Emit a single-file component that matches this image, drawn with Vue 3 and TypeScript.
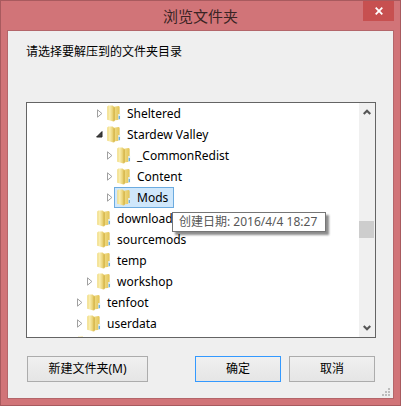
<script setup lang="ts">
import { ref } from 'vue'

interface FolderRow {
  name: string
  depth: number
  state: 'closed' | 'open' | 'leaf'
  tip?: string
}

const rows: FolderRow[] = [
  { name: 'Sheltered', depth: 3, state: 'closed' },
  { name: 'Stardew Valley', depth: 3, state: 'open' },
  { name: '_CommonRedist', depth: 4, state: 'closed' },
  { name: 'Content', depth: 4, state: 'closed' },
  { name: 'Mods', depth: 4, state: 'closed', tip: '创建日期: 2016/4/4 18:27' },
  { name: 'downloading', depth: 2, state: 'leaf' },
  { name: 'sourcemods', depth: 2, state: 'leaf' },
  { name: 'temp', depth: 2, state: 'leaf' },
  { name: 'workshop', depth: 2, state: 'closed' },
  { name: 'tenfoot', depth: 1, state: 'closed' },
  { name: 'userdata', depth: 1, state: 'closed' },
  { name: '', depth: 0, state: 'leaf' },
]

const selected = ref('Mods')
</script>

<template>
  <main class="window">
    <svg width="0" height="0" class="defs" aria-hidden="true">
      <defs>
        <linearGradient id="folder-front" x1="0" x2="1" y1="0" y2="0">
          <stop offset="0" stop-color="#f0da80" />
          <stop offset="0.35" stop-color="#faeeb0" />
          <stop offset="1" stop-color="#dfc052" />
        </linearGradient>
        <linearGradient id="folder-back" x1="0" x2="1" y1="0" y2="0">
          <stop offset="0" stop-color="#f6e596" />
          <stop offset="1" stop-color="#e2c458" />
        </linearGradient>
      </defs>
    </svg>

    <header class="titlebar">
      <h1 class="title">浏览文件夹</h1>
      <button class="close" type="button" aria-label="关闭">
        <svg width="8" height="8" viewBox="0 0 8 8" aria-hidden="true">
          <path d="M0.7 0.7L7.3 7.3M7.3 0.7L0.7 7.3" stroke="#fff" stroke-width="1.8" />
        </svg>
      </button>
    </header>

    <section class="client">
      <p class="prompt">请选择要解压到的文件夹目录</p>

      <div class="tree-box">
        <ul class="tree" role="tree" aria-label="文件夹">
          <li
            v-for="(row, i) in rows"
            :key="i"
            class="row"
            :class="'depth-' + row.depth"
            role="treeitem"
            :aria-selected="row.name === selected"
          >
            <span class="twisty">
              <svg v-if="row.state === 'closed'" width="6" height="9" viewBox="0 0 6 9" aria-hidden="true">
                <path d="M0.5 0.8V8.2L4.9 4.5Z" fill="#fff" stroke="#a0a0a0" />
              </svg>
              <svg v-else-if="row.state === 'open'" width="7" height="7" viewBox="0 0 7 7" aria-hidden="true">
                <path d="M6 0.6V6H0.6Z" fill="#404040" stroke="#262626" />
              </svg>
            </span>
            <button
              class="node"
              :class="{ selected: row.name && row.name === selected }"
              type="button"
              @click="selected = row.name"
            >
              <svg class="folder" width="14" height="17" viewBox="0 0 14 17" aria-hidden="true">
                <path d="M5 2L11.6 1L12.6 1.8V14.8L6 15.6Z" fill="url(#folder-back)" />
                <path d="M0.2 1.6L1.4 0.6H5.6L7.4 2.2V16.2L6.4 16.4L0.2 14.8Z" fill="url(#folder-front)" />
                <path d="M7.2 2.4V15.8" stroke="#cdaa3e" stroke-width="0.8" />
                <path d="M11.2 9H13.2V14.6L11.2 15Z" fill="#e2eef5" />
                <path d="M11.7 11H12.9V14H11.7Z" fill="#5ea9de" />
              </svg>
              <span class="label">{{ row.name }}</span>
            </button>
            <span v-if="row.tip" class="tip" role="tooltip">{{ row.tip }}</span>
          </li>
        </ul>
        <div class="scrollbar" aria-hidden="true">
          <svg width="8" height="6" viewBox="0 0 8 6">
            <path d="M0.7 5L4 1.7L7.3 5" fill="none" stroke="#555" stroke-width="2.2" />
          </svg>
          <div class="track"><div class="thumb"></div></div>
          <svg width="8" height="6" viewBox="0 0 8 6">
            <path d="M0.7 1L4 4.3L7.3 1" fill="none" stroke="#555" stroke-width="2.2" />
          </svg>
        </div>
      </div>

      <footer class="actions">
        <button class="btn wide" type="button">新建文件夹(M)</button>
        <button class="btn primary" type="button">确定</button>
        <button class="btn" type="button">取消</button>
      </footer>

      <svg class="grip" width="8" height="8" viewBox="0 0 8 8" aria-hidden="true">
        <path d="M6 0h2v2h-2zM3 3h2v2h-2zM6 3h2v2h-2zM0 6h2v2h-2zM3 6h2v2h-2zM6 6h2v2h-2z" fill="#bdbdbd" />
      </svg>
    </section>
  </main>
</template>

<style>
body {
  margin: 0;
}
</style>

<style scoped>
.window {
  box-sizing: border-box;
  min-height: 100vh;
  display: flex;
  flex-direction: column;
  padding: 0 6px 6px;
  border: 1px solid #a85a5e;
  background: #d17478;
  color: #000;
  font-family: 'Noto Sans', 'Noto Sans CJK SC', sans-serif;
  font-size: 12px;
}

.defs {
  position: absolute;
}

button {
  font: inherit;
  color: inherit;
}

.titlebar {
  display: grid;
  grid-template-columns: 31px 1fr 31px;
  height: 29px;
}

.title {
  grid-column: 2;
  margin: 0;
  text-align: center;
  font-size: 15px;
  font-weight: 400;
  line-height: 30px;
  color: #3a2424;
}

.close {
  display: flex;
  align-items: center;
  justify-content: center;
  height: 20px;
  padding: 0;
  border: 0;
  background: #c75050;
}

.client {
  position: relative;
  flex: 1;
  display: flex;
  flex-direction: column;
  padding: 11px 17px 16px 18px;
  border: 1px solid #b4666a;
  background: #efefef;
}

.prompt {
  margin: 0 0 40px;
  line-height: 20px;
}

.tree-box {
  flex: 1 0 234px;
  height: 234px;
  display: flex;
  overflow: hidden;
  border: 1px solid #646464;
  background: #fff;
}

.tree {
  flex: 1;
  margin: 0;
  padding: 0;
  list-style: none;
}

.row {
  position: relative;
  display: flex;
  align-items: center;
  height: 21px;
}

.depth-0 { padding-left: 37px; }
.depth-1 { padding-left: 47px; }
.depth-2 { padding-left: 57px; }
.depth-3 { padding-left: 67px; }
.depth-4 { padding-left: 77px; }

.twisty {
  width: 10px;
  display: flex;
  justify-content: flex-end;
  padding-right: 1px;
  box-sizing: border-box;
}

.node {
  display: flex;
  align-items: center;
  gap: 6px;
  height: 21px;
  padding: 0 5px 0 2px;
  border: 1px solid transparent;
  background: none;
  line-height: 19px;
}

.node.selected {
  border-color: #6cabdf;
  background: #cfe7fb;
}

.tip {
  position: absolute;
  z-index: 1;
  top: 25px;
  left: 145px;
  padding: 0 8px 0 6px;
  border: 1px solid #767676;
  background: #fff;
  box-shadow: 3px 3px 2px rgba(0, 0, 0, 0.45);
  color: #575757;
  line-height: 18px;
  white-space: nowrap;
}

.scrollbar {
  width: 16px;
  display: flex;
  flex-direction: column;
  align-items: center;
  padding: 6px 0;
  background: #f0f0f0;
}

.track {
  flex: 1;
  align-self: stretch;
  display: flex;
  flex-direction: column;
  padding: 106px 1px 0 0;
}

.thumb {
  height: 17px;
  background: #cdcdcd;
}

.actions {
  display: flex;
  gap: 8px;
  padding: 18px 1px 0;
}

.btn {
  box-sizing: border-box;
  width: 86px;
  height: 26px;
  padding: 0;
  border: 1px solid #acacac;
  background: linear-gradient(#f0f0f0, #e5e5e5);
  line-height: 20px;
}

.btn.wide {
  width: 121px;
  margin-right: auto;
}

.btn.primary {
  border-color: #3399ff;
}

.grip {
  position: absolute;
  right: 3px;
  bottom: 2px;
}
</style>
